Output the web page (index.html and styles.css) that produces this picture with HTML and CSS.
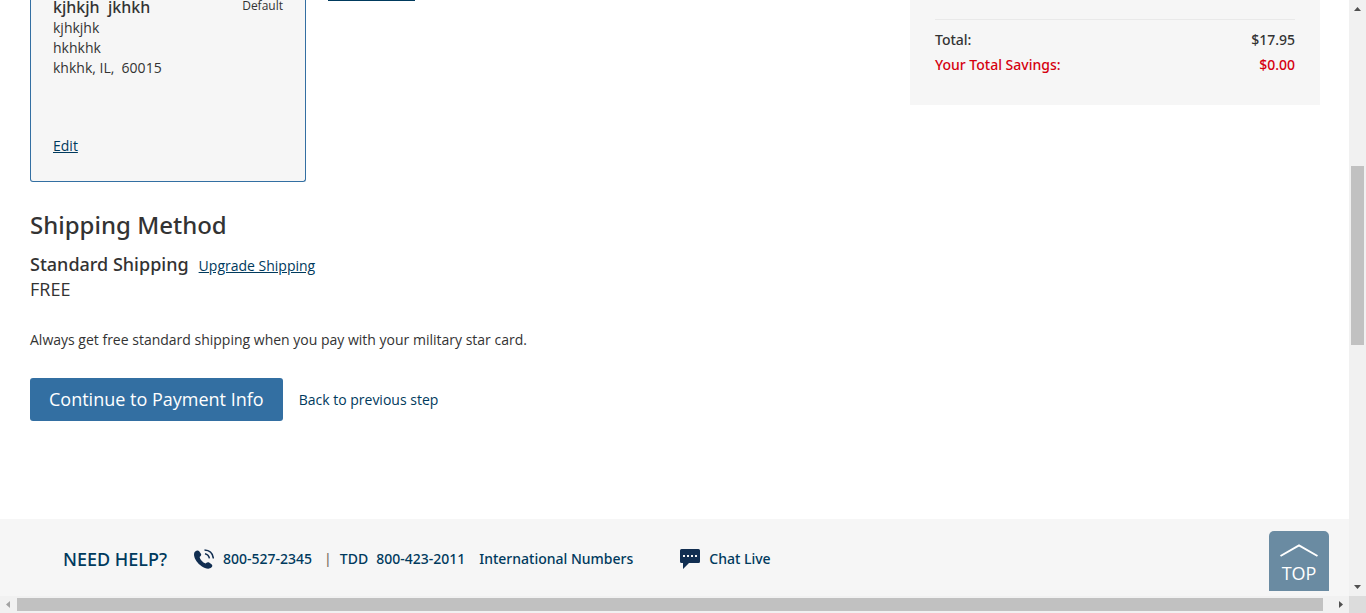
FILE: index.html
```html
<!DOCTYPE html>
<html lang="en">
<head>
<meta charset="utf-8">
<title>Checkout - Shipping</title>
<link rel="stylesheet" href="styles.css">
</head>
<body>
<div class="window">
  <div class="page">
    <main class="checkout">
      <div class="checkout-main">
        <div class="addresses">
          <section class="address-card">
            <div class="address-head">
              <strong class="address-name">kjhkjh&nbsp; jkhkh</strong>
              <span class="address-default">Default</span>
            </div>
            <address class="address-lines">kjhkjhk<br>hkhkhk<br>khkhk, IL,&nbsp; 60015</address>
            <a class="link" href="#edit">Edit</a>
          </section>
          <div class="address-divider"></div>
        </div>
        <section class="shipping">
          <h2 class="section-title">Shipping Method</h2>
          <div class="method">
            <h3 class="method-name">Standard Shipping</h3>
            <a class="link" href="#upgrade">Upgrade Shipping</a>
          </div>
          <p class="method-price">FREE</p>
          <p class="method-note">Always get free standard shipping when you pay with your military star card.</p>
        </section>
        <div class="actions">
          <button class="primary" type="button">Continue to Payment Info</button>
          <a class="back" href="#back">Back to previous step</a>
        </div>
      </div>
      <aside class="summary">
        <dl class="totals">
          <div class="total-row"><dt>Total:</dt><dd>$17.95</dd></div>
          <div class="total-row savings"><dt>Your Total Savings:</dt><dd>$0.00</dd></div>
        </dl>
      </aside>
    </main>
    <footer class="help">
      <span class="help-title">NEED HELP?</span>
      <a class="help-link phone" href="tel:8005272345">
        <svg class="help-icon" viewBox="0 0 20 20" aria-hidden="true">
          <path fill="currentColor" d="M1.2 2.5C2.5 1.4 4.2.9 5.2 2.2l1.7 2.6c.6 1 .3 1.8-.5 2.5l-.8.7c.4 2.6 3.1 5.3 6 6.6l.9-.8c.8-.7 1.700-.8 2.600-.2l2.400 1.700c1.200.9 1 2.200-.2 3.300-2.200 2.100-6.300 1-9.700-1.300C3.600 14.500.6 10.500.1 6.600-.1 4.900.2 3.400 1.200 2.500Z"/>
          <path fill="none" stroke="currentColor" stroke-width="1.500" d="M11 4.800c2.300.5 3.900 2.100 4.400 4.600M10.500 1c4.800.2 8.300 3.400 8.900 8.500"/>
        </svg>
        800-527-2345
      </a>
      <span class="pipe">|</span>
      <span class="tdd">TDD</span>
      <a class="help-link" href="tel:8004232011">800-423-2011</a>
      <a class="help-link international" href="#international">International Numbers</a>
      <a class="help-link chat" href="#chat">
        <svg class="help-icon" viewBox="0 0 20 20" aria-hidden="true">
          <path fill="currentColor" d="M1.500 0h17A1.500 1.500 0 0 1 20 1.500v11a1.500 1.500 0 0 1-1.500 1.500H9l-6 6v-6H1.500A1.500 1.500 0 0 1 0 12.500v-11A1.500 1.500 0 0 1 1.500 0Z"/>
          <path fill="#f5f5f5" d="M3 6h2v2H3zM7 6h2v2H7zM11 6h2v2h-2zM15 6h2v2h-2z"/>
        </svg>
        Chat Live
      </a>
    </footer>
    <a class="to-top" href="#top">
      <svg class="to-top-icon" viewBox="0 0 38 13" aria-hidden="true"><path fill="none" stroke="#fff" stroke-width="2" d="M.5 12 19 1.500 37.500 12"/></svg>
      TOP
    </a>
  </div>
  <div class="bar bar-vertical" aria-hidden="true">
    <svg class="arrow" viewBox="0 0 17 17"><path fill="#505050" d="M5 11h7L8.500 7z"/></svg>
    <div class="track"><div class="thumb"></div></div>
    <svg class="arrow" viewBox="0 0 17 17"><path fill="#505050" d="M5 6h7L8.500 10z"/></svg>
  </div>
  <div class="bar bar-horizontal" aria-hidden="true">
    <svg class="arrow" viewBox="0 0 17 17"><path fill="#a3a3a3" d="M10 5v7L6 8.500z"/></svg>
    <div class="track"><div class="thumb"></div></div>
    <svg class="arrow" viewBox="0 0 17 17"><path fill="#505050" d="M7 5v7l4-3.500z"/></svg>
  </div>
  <div class="corner"></div>
</div>
</body>
</html>
```

FILE: styles.css
```css
* {
  box-sizing: border-box;
}

body {
  margin: 0;
  font: 14px/20px "Open Sans", "Noto Sans", sans-serif;
  color: #333;
  background: #fff;
}

h2, h3, p, dl, dd {
  margin: 0;
}

a {
  color: #003a5d;
  text-decoration: none;
}

.window {
  display: grid;
  grid-template-columns: 1fr 17px;
  grid-template-rows: 1fr 17px;
  height: 100vh;
  overflow: hidden;
}

.page {
  position: relative;
  display: flex;
  flex-direction: column;
  min-height: 0;
}

.checkout {
  flex: 1;
  display: flex;
  align-items: flex-start;
  justify-content: space-between;
  padding: 0 29px 0 30px;
}

.addresses {
  display: flex;
  align-items: flex-start;
  gap: 22px;
}

.address-card {
  width: 276px;
  padding: 0 22px 25px;
  border: 1px solid #336fa2;
  border-top: 0;
  border-radius: 0 0 3px 3px;
  background: #f6f6f6;
}

.address-head {
  display: flex;
  justify-content: space-between;
  padding-bottom: 4px;
  line-height: 14px;
}

.address-name,
.section-title,
.method-name,
.total-row,
.help {
  font-family: "Noto Sans", "Open Sans", sans-serif;
  font-weight: 500;
}

.address-name {
  font-size: 16px;
}

.address-default {
  font-size: 12px;
  line-height: 12px;
}

.address-lines {
  margin-bottom: 58px;
  font-style: normal;
}

.address-divider {
  width: 87px;
  height: 1px;
  background: #003a5d;
}

.link {
  text-decoration: underline;
}

.section-title {
  margin: 26px 0 10px;
  font-size: 24px;
  line-height: 34px;
}

.method {
  display: flex;
  align-items: baseline;
  gap: 10px;
}

.method-name {
  font-size: 18px;
  line-height: 25px;
}

.method-price {
  font-size: 18px;
  line-height: 25px;
}

.method-note {
  margin: 28px 0;
}

.actions {
  display: flex;
  align-items: center;
  gap: 16px;
}

.primary {
  padding: 9px 19px;
  border: 0;
  border-radius: 3px;
  background: #336fa2;
  color: #fff;
  font: 18px/25px "Open Sans", "Noto Sans", sans-serif;
}

.summary {
  width: 410px;
  padding: 19px 25px 28px;
  background: #f6f6f6;
}

.totals {
  padding-top: 7px;
  border-top: 1px solid #e9e9e9;
}

.total-row {
  display: flex;
  justify-content: space-between;
  line-height: 25px;
}

.savings {
  color: #d5000f;
}

.help {
  display: flex;
  align-items: center;
  height: 77px;
  padding: 3px 63px 0;
  background: #f6f6f6;
  color: #003a5d;
}

.help-title {
  margin-right: 27px;
  font-size: 18px;
}

.help-link {
  display: flex;
  align-items: center;
  gap: 9px;
}

.help-icon {
  width: 20px;
  height: 20px;
  color: #112e51;
}

.pipe {
  margin: 0 8px 0 12px;
  color: #7c6f64;
}

.tdd {
  margin-right: 8px;
}

.international {
  margin: 0 47px 0 14px;
}

.to-top {
  position: absolute;
  right: 20px;
  bottom: 5px;
  display: flex;
  flex-direction: column;
  align-items: center;
  gap: 6px;
  width: 60px;
  height: 60px;
  padding-top: 13px;
  border-radius: 5px 5px 0 0;
  background: #6a8ba2;
  color: #fff;
  font-size: 18px;
}

.to-top-icon {
  width: 38px;
  height: 13px;
}

.bar {
  display: flex;
  background: #f1f1f1;
}

.bar-vertical {
  flex-direction: column;
}

.arrow {
  flex: none;
  width: 17px;
  height: 17px;
}

.track {
  flex: 1;
  display: flex;
}

.thumb {
  background: #c1c1c1;
}

.bar-vertical .track {
  flex-direction: column;
  padding: 149px 2px 0;
}

.bar-vertical .thumb {
  height: 179px;
}

.bar-horizontal .track {
  padding: 2px 9px 2px 0;
}

.bar-horizontal .thumb {
  flex: 1;
}

.corner {
  background: #dcdcdc;
}
```
